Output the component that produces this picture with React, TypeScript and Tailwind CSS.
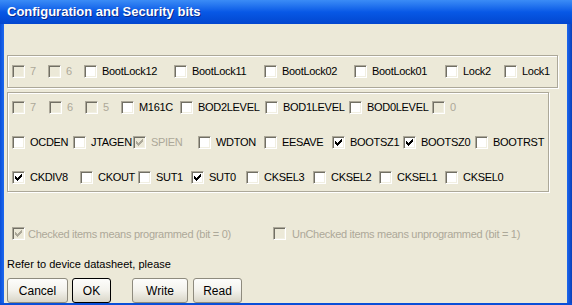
import type { ReactNode } from 'react';

type Bit = {
  label: string;
  w?: string;
  checked?: boolean;
  disabled?: boolean;
};

const lockBits: Bit[] = [
  { label: '7', w: 'w-[36px]', disabled: true },
  { label: '6', w: 'w-[36px]', disabled: true },
  { label: 'BootLock12', w: 'w-[90px]' },
  { label: 'BootLock11', w: 'w-[90px]' },
  { label: 'BootLock02', w: 'w-[90px]' },
  { label: 'BootLock01', w: 'w-[91px]' },
  { label: 'Lock2', w: 'w-[59px]' },
  { label: 'Lock1' },
];

const fuseRows: Bit[][] = [
  [
    { label: '7', w: 'w-[37px]', disabled: true },
    { label: '6', w: 'w-[36px]', disabled: true },
    { label: '5', w: 'w-[36px]', disabled: true },
    { label: 'M161C', w: 'w-[59px]' },
    { label: 'BOD2LEVEL', w: 'w-[85px]' },
    { label: 'BOD1LEVEL', w: 'w-[84px]' },
    { label: 'BOD0LEVEL', w: 'w-[83px]' },
    { label: '0', disabled: true },
  ],
  [
    { label: 'OCDEN', w: 'w-[61px]' },
    { label: 'JTAGEN', w: 'w-[60px]' },
    { label: 'SPIEN', w: 'w-[65px]', checked: true, disabled: true },
    { label: 'WDTON', w: 'w-[66px]' },
    { label: 'EESAVE', w: 'w-[68px]' },
    { label: 'BOOTSZ1', w: 'w-[71px]', checked: true },
    { label: 'BOOTSZ0', w: 'w-[72px]', checked: true },
    { label: 'BOOTRST' },
  ],
  [
    { label: 'CKDIV8', w: 'w-[68px]', checked: true },
    { label: 'CKOUT', w: 'w-[58px]' },
    { label: 'SUT1', w: 'w-[53px]' },
    { label: 'SUT0', w: 'w-[55px]', checked: true },
    { label: 'CKSEL3', w: 'w-[67px]' },
    { label: 'CKSEL2', w: 'w-[66px]' },
    { label: 'CKSEL1', w: 'w-[66px]' },
    { label: 'CKSEL0' },
  ],
];

function CheckBox({ checked, disabled }: { checked?: boolean; disabled?: boolean }): ReactNode {
  return (
    <div
      className={`flex h-[13px] w-[13px] shrink-0 items-center justify-center border border-t-[#aca899] border-l-[#aca899] border-b-white border-r-white shadow-[inset_1px_1px_0_#716f64,inset_-1px_-1px_0_#f1efe2] ${
        disabled ? 'bg-[#ece9d8]' : 'bg-white'
      }`}
    >
      {checked && (
        <svg width="7" height="7" viewBox="0 0 7 7" shapeRendering="crispEdges">
          <path
            fill={disabled ? '#aca899' : '#000'}
            d="M6 0h1v1h-1z M5 1h2v1h-2z M0 2h1v1h-1z M4 2h3v1h-3z M0 3h2v1h-2z M3 3h3v1h-3z M0 4h5v1h-5z M1 5h3v1h-3z M2 6h1v1h-1z"
          />
        </svg>
      )}
    </div>
  );
}

function BitBox({ bit }: { bit: Bit }): ReactNode {
  return (
    <div className={`flex shrink-0 items-center gap-[5px] ${bit.w ?? ''}`}>
      <CheckBox checked={bit.checked} disabled={bit.disabled} />
      <span
        className={`whitespace-nowrap leading-[13px] tracking-[-0.3px] ${
          bit.disabled ? 'text-[#aca899]' : 'text-black'
        }`}
      >
        {bit.label}
      </span>
    </div>
  );
}

function XpButton({ label, w, isDefault }: { label: string; w: string; isDefault?: boolean }): ReactNode {
  return (
    <button
      type="button"
      className={`h-[25px] ${w} rounded-[3px] border bg-gradient-to-b from-[#fdfdfb] via-[#f3f2ec] to-[#d9d6c8] text-[12px] text-black ${
        isDefault ? 'border-black' : 'border-[#8e8b7e]'
      }`}
    >
      {label}
    </button>
  );
}

export default function App(): ReactNode {
  return (
    <div className="flex h-[305px] w-[572px] flex-col bg-[#0a4fd8] font-['Liberation_Sans',Arial,sans-serif] text-[11px]">
      <div className="flex h-[26px] items-center bg-gradient-to-b from-[#3b8cf6] via-[#0858e6] to-[#0346cf] pl-[7px]">
        <span className="text-[13px] font-bold text-white [text-shadow:1px_1px_0_#0a2a8a]">
          Configuration and Security bits
        </span>
      </div>
      <div className="flex flex-1">
        <div className="w-[4px] bg-gradient-to-r from-[#0a4fd8] to-[#1c68f0]" />
        <div className="flex flex-1 flex-col bg-[#ece9d8] px-[3px] pt-[31px]">
          <div className="flex h-[33px] w-[551px] items-center border border-[#aca899] pl-[4px] shadow-[1px_1px_0_#fff,inset_1px_1px_0_#fff]">
            {lockBits.map((b, i) => (
              <BitBox key={i} bit={b} />
            ))}
          </div>
          <div className="mt-[4px] flex h-[100px] w-[542px] flex-col gap-[22px] border border-[#aca899] pl-[4px] pt-[8px] shadow-[1px_1px_0_#fff,inset_1px_1px_0_#fff]">
            {fuseRows.map((row, r) => (
              <div key={r} className="flex h-[13px] items-center">
                {row.map((b, i) => (
                  <BitBox key={i} bit={b} />
                ))}
              </div>
            ))}
          </div>
          <div className="mt-[34px] flex items-center pl-[5px] tracking-[-0.3px]">
            <div className="flex w-[261px] items-center gap-[3px]">
              <CheckBox checked disabled />
              <span className="text-[#aca899]">Checked items means programmed (bit = 0)</span>
            </div>
            <div className="flex items-center gap-[6px]">
              <CheckBox disabled />
              <span className="text-[#aca899]">UnChecked items means unprogrammed (bit = 1)</span>
            </div>
          </div>
          <p className="mt-[16px] leading-[13px] text-black">Refer to device datasheet, please</p>
          <div className="mt-[7px] flex">
            <XpButton label="Cancel" w="w-[61px]" />
            <div className="ml-[4px]">
              <XpButton label="OK" w="w-[39px]" isDefault />
            </div>
            <div className="ml-[21px]">
              <XpButton label="Write" w="w-[56px]" />
            </div>
            <div className="ml-[5px]">
              <XpButton label="Read" w="w-[49px]" />
            </div>
          </div>
        </div>
        <div className="w-[5px] bg-gradient-to-r from-[#1c68f0] to-[#0a3fb8]" />
      </div>
      <div className="h-[2px] bg-[#0a4fd8]" />
    </div>
  );
}
